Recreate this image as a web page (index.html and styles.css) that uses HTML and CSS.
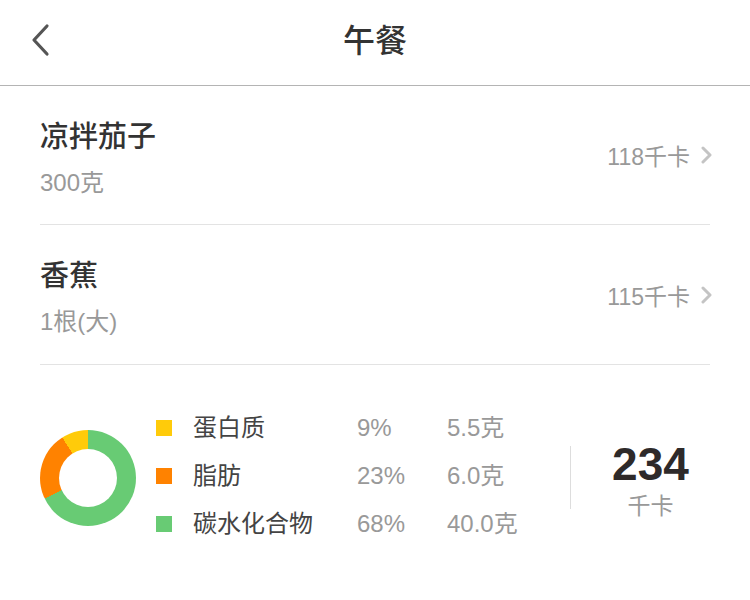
FILE: index.html
```html
<!DOCTYPE html>
<html lang="zh">
<head>
<meta charset="utf-8">
<title>午餐</title>
<link rel="stylesheet" href="styles.css">
</head>
<body>
<div class="page">
  <header class="header">
    <span class="back">
      <svg width="22" height="34" viewBox="0 0 22 34"><path d="M18 3 L5 17 L18 31" fill="none" stroke="#555" stroke-width="3.2" stroke-linecap="round" stroke-linejoin="round"/></svg>
    </span>
    <h1 class="title">午餐</h1>
  </header>

  <ul class="foods">
    <li class="food">
      <div class="food-info">
        <div class="food-name">凉拌茄子</div>
        <div class="food-amount">300克</div>
      </div>
      <div class="food-kcal">118千卡
        <svg class="chev" width="14" height="18" viewBox="0 0 14 18"><path d="M3 2 L10 9 L3 16" fill="none" stroke="#c4c4c4" stroke-width="3" stroke-linecap="round" stroke-linejoin="round"/></svg>
      </div>
    </li>
    <li class="food">
      <div class="food-info">
        <div class="food-name">香蕉</div>
        <div class="food-amount">1根(大)</div>
      </div>
      <div class="food-kcal">115千卡
        <svg class="chev" width="14" height="18" viewBox="0 0 14 18"><path d="M3 2 L10 9 L3 16" fill="none" stroke="#c4c4c4" stroke-width="3" stroke-linecap="round" stroke-linejoin="round"/></svg>
      </div>
    </li>
  </ul>

  <section class="summary">
    <div class="donut"></div>
    <div class="legend">
      <span class="sq sq-protein"></span><span class="lg-name">蛋白质</span><span class="lg-pct">9%</span><span class="lg-g">5.5克</span>
      <span class="sq sq-fat"></span><span class="lg-name">脂肪</span><span class="lg-pct">23%</span><span class="lg-g">6.0克</span>
      <span class="sq sq-carb"></span><span class="lg-name">碳水化合物</span><span class="lg-pct">68%</span><span class="lg-g">40.0克</span>
    </div>
    <div class="vdiv"></div>
    <div class="total">
      <div class="total-num">234</div>
      <div class="total-unit">千卡</div>
    </div>
  </section>
</div>
</body>
</html>
```

FILE: styles.css
```css
* { box-sizing: border-box; }
html, body { margin: 0; padding: 0; background: #fff; }
body {
  font-family: "Liberation Sans", "Noto Sans CJK SC", sans-serif;
  color: #333;
  width: 750px;
}
.header {
  height: 86px;
  border-bottom: 1px solid #b4b4b4;
  display: flex;
  align-items: center;
  justify-content: center;
  position: relative;
}
.back {
  position: absolute;
  left: 29px;
  top: 23px;
  display: flex;
}
.title {
  margin: 0;
  font-size: 32px;
  font-weight: 500;
  color: #333;
  line-height: 40px;
  margin-top: -4px;
}
.foods {
  list-style: none;
  margin: 0;
  padding: 0 40px;
}
.food {
  height: 139px;
  border-bottom: 1px solid #e3e3e3;
  display: flex;
  align-items: center;
  justify-content: space-between;
}
.food + .food { height: 140px; }
.food-info { margin-top: 4px; }
.food-name {
  font-size: 29px;
  line-height: 40px;
  color: #333;
  font-weight: 500;
}
.food-amount {
  font-size: 24px;
  line-height: 30px;
  color: #999;
  margin-top: 11px;
}
.food-kcal {
  font-size: 23px;
  color: #999;
  display: flex;
  align-items: center;
}
.chev { margin-left: 10px; margin-right: -4px; }
.summary {
  display: flex;
  align-items: center;
  padding: 41px 40px 0;
}
.donut {
  width: 96px;
  height: 96px;
  border-radius: 50%;
  background: conic-gradient(#68cb74 0 68%, #ff8200 68% 91%, #ffcb0a 91% 100%);
  display: flex;
  align-items: center;
  justify-content: center;
  flex: none;
  margin-top: 2px;
}
.donut::before {
  content: "";
  width: 58px;
  height: 58px;
  border-radius: 50%;
  background: #fff;
}
.legend {
  margin-left: 20px;
  display: grid;
  grid-template-columns: 37px 164px 90px 90px;
  grid-auto-rows: 48px;
  align-items: center;
  margin-top: -2px;
}
.sq { width: 16px; height: 16px; display: block; }
.sq-protein { background: #ffcb0a; }
.sq-fat { background: #ff8200; }
.sq-carb { background: #68cb74; }
.lg-name, .lg-pct, .lg-g { font-size: 24px; line-height: 30px; height: 30px; }
.lg-name { color: #444; }
.lg-pct, .lg-g { color: #999; }
.vdiv {
  width: 1px;
  height: 63px;
  background: #ddd;
  margin-left: 33px;
}
.total {
  width: 120px;
  margin-left: 20px;
  margin-top: 6px;
  text-align: center;
}
.total-num {
  font-size: 46px;
  font-weight: 700;
  color: #2e2a2a;
  line-height: 50px;
}
.total-unit {
  font-size: 23px;
  color: #999;
  line-height: 30px;
  margin-top: 2px;
}
```
